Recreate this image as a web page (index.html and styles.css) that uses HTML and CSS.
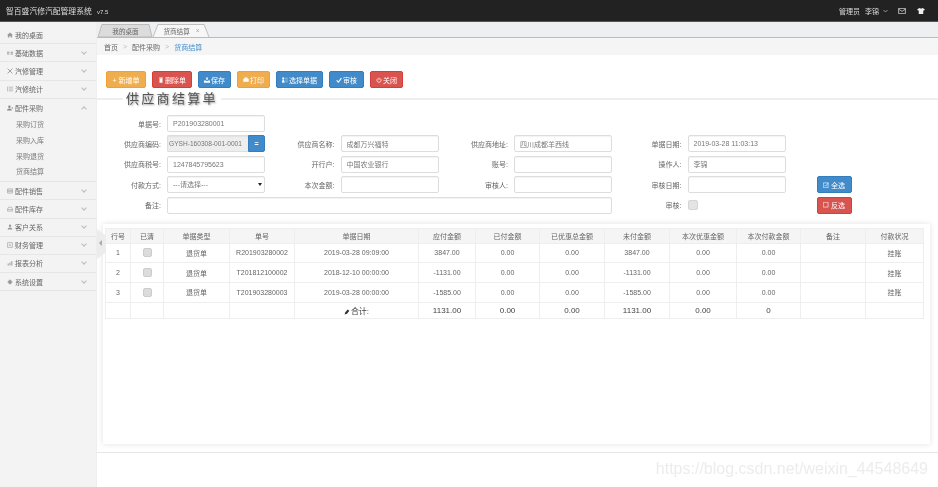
FILE: index.html
```html
<!DOCTYPE html>
<html lang="zh-CN">
  <head>
    <meta charset="UTF-8" />
    <title>智百盛汽修汽配管理系统</title>
    <link rel="stylesheet" href="styles.css">
  </head>
  <body>
    <header class="topbar">
      <div class="brand">智百盛汽修汽配管理系统 <small>v7.5</small></div>
      <div class="userbar">
        <span>管理员</span>
        <span class="username">李锦</span>
        <svg class="ico chev-top" viewBox="0 0 10 6"><path d="M1 1l4 4 4-4" fill="none" stroke="#ddd" stroke-width="1.2"/></svg>
        <svg class="ico mail" viewBox="0 0 10 8"><path d="M.5.5h9v7h-9z M.5 1.5l4.5 3 4.5-3" fill="none" stroke="#ddd"/></svg>
        <svg class="ico shirt" viewBox="0 0 10 8"><path d="M3 0L0 1.5 1 3.5l1-.4V8h6V3.100l1 .4 1-2L7 0Q5 1.500 3 0z" fill="#eee"/></svg>
      </div>
    </header>
    <div class="layout">
      <aside class="sidebar">
        <div class="nav-item"><svg class="ico" viewBox="0 0 10 10"><path d="M5 1L0 5.500h1.500V9h2.500V6.500h2V9h2.500V5.500H10z" fill="#999"/></svg>我的桌面</div>
        <div class="nav-item"><svg class="ico" viewBox="0 0 10 10"><path d="M0 3h4v1.500H0zM6 3h4v1.500H6zM0 6h4v1.500H0zM6 6h4v1.500H6z" fill="#999"/></svg>基础数据<i class="chev"></i></div>
        <div class="nav-item"><svg class="ico" viewBox="0 0 10 10"><path d="M1 1l8 8M9 1L1 9" stroke="#999" stroke-width="1.500"/></svg>汽修管理<i class="chev"></i></div>
        <div class="nav-item"><svg class="ico" viewBox="0 0 10 10"><path d="M1 1v8M3 2h7M3 5h7M3 8h7" stroke="#999"/></svg>汽修统计<i class="chev"></i></div>
        <div class="nav-item open"><svg class="ico" viewBox="0 0 10 10"><path d="M4 1a2 2 0 1 1 0 4 2 2 0 0 1 0-4zM0 9q0-3 4-3t4 3zM8 3l2 2-2 2z" fill="#888"/></svg>配件采购<i class="chev up"></i></div>
        <div class="subnav">
          <div>采购订货</div>
          <div>采购入库</div>
          <div>采购退货</div>
          <div>货商结算</div>
        </div>
        <div class="nav-item"><svg class="ico" viewBox="0 0 10 10"><path d="M1 1.500h8v7H1zM1 4h8M1 6h8" fill="none" stroke="#999"/></svg>配件销售<i class="chev"></i></div>
        <div class="nav-item"><svg class="ico" viewBox="0 0 10 10"><path d="M2.500 2h5l2 4v2.500h-9V6zM.5 6h9" fill="none" stroke="#999"/></svg>配件库存<i class="chev"></i></div>
        <div class="nav-item"><svg class="ico" viewBox="0 0 10 10"><path d="M5 1a2 2 0 1 1 0 4 2 2 0 0 1 0-4zM1 9q0-3 4-3t4 3z" fill="#999"/></svg>客户关系<i class="chev"></i></div>
        <div class="nav-item"><svg class="ico" viewBox="0 0 10 10"><path d="M1 1h8v8H1zM3.500 5h3M5 3.500v3" fill="none" stroke="#999"/></svg>财务管理<i class="chev"></i></div>
        <div class="nav-item"><svg class="ico" viewBox="0 0 10 10"><path d="M1 9V6h2v3zM4 9V4h2v5zM7 9V2h2v7z" fill="#aaa"/></svg>报表分析<i class="chev"></i></div>
        <div class="nav-item"><svg class="ico" viewBox="0 0 10 10"><circle cx="5" cy="5" r="3.200" fill="#999"/><path d="M5 .5v9M.5 5h9" stroke="#999"/></svg>系统设置<i class="chev"></i></div>
      </aside>
      <main class="main">
        <div class="handle"><i></i></div>
        <nav class="tabs">
          <div class="tab">
            <svg class="tab-shape" viewBox="0 0 56 13" preserveAspectRatio="none"><path d="M0 13L4 .5H52L55 13z" fill="#dcdcdc" stroke="#aaa" stroke-width=".7"/></svg>
            <span>我的桌面</span>
          </div>
          <div class="tab current">
            <svg class="tab-shape" viewBox="0 0 58 13" preserveAspectRatio="none"><path d="M0 13L5 .5H52L57 13" fill="#f7f7f7" stroke="#aaa" stroke-width=".7"/></svg>
            <span>货商结算</span><b>×</b>
          </div>
        </nav>
        <div class="crumbs">
          <span>首页</span><em>&gt;</em><span>配件采购</span><em>&gt;</em><a>货商结算</a>
        </div>
        <div class="toolbar">
          <button class="btn orange w40">+ 新增单</button>
          <button class="btn red w40"><svg class="ico" viewBox="0 0 10 10"><path d="M2 1h6v1.500H2zM2.500 3h5v6.500h-5z" fill="#fff"/></svg>删除单</button>
          <button class="btn blue w33"><svg class="ico" viewBox="0 0 10 10"><path d="M5 0l2 2.500H3zM4 2h2v3H4zM0 6h3l2 1 2-1h3v3.500H0z" fill="#fff"/></svg>保存</button>
          <button class="btn orange w33"><svg class="ico" viewBox="0 0 10 10"><path d="M2.500 1h5v2h2v5h-9V3h2z" fill="#fff"/></svg>打印</button>
          <button class="btn blue w47"><svg class="ico" viewBox="0 0 10 10"><path d="M2 1a1.500 1.500 0 1 1 0 3 1.500 1.500 0 0 1 0-3zM0 9q0-4 2-4t2 4zM5 2h5M5 5h5M5 8h5" fill="#fff" stroke="#fff" stroke-width=".6"/></svg>选择单据</button>
          <button class="btn blue w35"><svg class="ico" viewBox="0 0 10 10"><path d="M1 5.500l3 3 5-6.500" fill="none" stroke="#fff" stroke-width="1.800"/></svg>审核</button>
          <button class="btn red w33"><svg class="ico" viewBox="0 0 10 10"><path d="M3 2.500a3.500 3.500 0 1 0 4 0M5 1v4" fill="none" stroke="#fff" stroke-width="1.200"/></svg>关闭</button>
        </div>
        <fieldset class="sheet">
          <legend>供应商结算单</legend>
          <form class="fields">
            <label>单据号:</label>
            <input class="input" value="P201903280001" />
            <div class="row-rest"></div>

            <label>供应商编码:</label>
            <div class="input-group">
              <input class="input locked" value="GYSH-160308-001-0001" />
              <button type="button" class="addon">=</button>
            </div>
            <label>供应商名称:</label>
            <input class="input" value="成都万兴福特" />
            <label>供应商地址:</label>
            <input class="input" value="四川成都羊西线" />
            <label>单据日期:</label>
            <input class="input" value="2019-03-28 11:03:13" />
            <div></div>

            <label>供应商税号:</label>
            <input class="input" value="1247845795623" />
            <label>开行户:</label>
            <input class="input" value="中国农业银行" />
            <label>账号:</label>
            <input class="input" />
            <label>操作人:</label>
            <input class="input" value="李锦" />
            <div></div>

            <label>付款方式:</label>
            <div class="select-wrap">
              <select class="input"><option>---请选择---</option></select>
            </div>
            <label>本次金额:</label>
            <input class="input" />
            <label>审核人:</label>
            <input class="input" />
            <label>审核日期:</label>
            <input class="input" />
            <button type="button" class="btn blue pick"><svg class="ico" viewBox="0 0 10 10"><path d="M.5 1.500h8v8h-8z" fill="none" stroke="#fff"/><path d="M2.500 5l2 2 5-6" fill="none" stroke="#fff"/></svg>全选</button>

            <label>备注:</label>
            <input class="input wide" />
            <label>审核:</label>
            <div class="check-cell"><input type="checkbox" class="check" /></div>
            <button type="button" class="btn red pick"><svg class="ico" viewBox="0 0 10 10"><path d="M.5.5h8v8h-8z" fill="none" stroke="#fff"/></svg>反选</button>
          </form>
        </fieldset>
        <section class="card">
          <table class="bills">
            <colgroup>
              <col><col><col><col><col><col><col><col><col><col><col><col><col>
            </colgroup>
            <thead>
              <tr>
                <th>行号</th><th>已清</th><th>单据类型</th><th>单号</th><th>单据日期</th><th>应付金额</th><th>已付金额</th><th>已优惠总金额</th><th>未付金额</th><th>本次优惠金额</th><th>本次付款金额</th><th>备注</th><th>付款状况</th>
              </tr>
            </thead>
            <tbody>
              <tr>
                <td>1</td><td><input type="checkbox" class="check" /></td><td>退货单</td><td>R201903280002</td><td>2019-03-28 09:09:00</td><td>3847.00</td><td>0.00</td><td>0.00</td><td>3847.00</td><td>0.00</td><td>0.00</td><td></td><td>挂账</td>
              </tr>
              <tr>
                <td>2</td><td><input type="checkbox" class="check" /></td><td>退货单</td><td>T201812100002</td><td>2018-12-10 00:00:00</td><td>-1131.00</td><td>0.00</td><td>0.00</td><td>-1131.00</td><td>0.00</td><td>0.00</td><td></td><td>挂账</td>
              </tr>
              <tr>
                <td>3</td><td><input type="checkbox" class="check" /></td><td>退货单</td><td>T201903280003</td><td>2019-03-28 00:00:00</td><td>-1585.00</td><td>0.00</td><td>0.00</td><td>-1585.00</td><td>0.00</td><td>0.00</td><td></td><td>挂账</td>
              </tr>
              <tr class="total">
                <td></td><td></td><td></td><td></td><td><svg class="ico" viewBox="0 0 10 10"><path d="M1 9l1-3 4-5 3 2-4 5z" fill="#333"/></svg>合计:</td><td>1131.00</td><td>0.00</td><td>0.00</td><td>1131.00</td><td>0.00</td><td>0</td><td></td><td></td>
              </tr>
            </tbody>
          </table>
        </section>
        <div class="foot-line"></div>
      </main>
    </div>
    <div class="watermark">https://blog.csdn.net/weixin_44548649</div>
  </body>
</html>
```

FILE: styles.css
```css
* {
  box-sizing: border-box;
}
html,
body {
  height: 487px;
  margin: 0;
  overflow: hidden;
  background: #fff;
}
body {
  color: #666;
  font-family: 'Liberation Sans', 'Noto Sans CJK SC', sans-serif;
  font-size: 7px;
  filter: blur(0.35px);
}
.ico {
  width: 6px;
  height: 6px;
  flex: none;
}

/* top bar */
.topbar {
  display: flex;
  justify-content: space-between;
  align-items: center;
  height: 22px;
  padding: 0 13px 0 6px;
  background: #222;
  border-bottom: 1px solid #555;
  color: #ddd;
}
.brand {
  font-size: 7.8px;
}
.brand small {
  margin-left: 3px;
  font-size: 6px;
}
.userbar {
  display: flex;
  align-items: center;
}
.username {
  margin-left: 5px;
}
.chev-top {
  margin-left: 4px;
  width: 5px;
}
.mail {
  margin-left: 10px;
  width: 8px;
}
.shirt {
  margin-left: 11px;
  width: 8px;
}

.layout {
  display: flex;
  height: 465px;
}

/* sidebar */
.sidebar {
  width: 97px;
  flex: none;
  padding-top: 4px;
  background: #f3f3f3;
  border-right: 1px solid #eee;
}
.nav-item {
  display: flex;
  align-items: center;
  gap: 2px;
  height: 18.2px;
  padding-left: 7px;
  border-bottom: 1px solid #e6e6e6;
  color: #666;
}
.nav-item.open {
  border-bottom: 0;
}
.chev {
  width: 4px;
  height: 4px;
  margin-left: auto;
  margin-right: 10px;
  margin-top: -2px;
  border-right: 1px solid #bbb;
  border-bottom: 1px solid #bbb;
  transform: rotate(45deg);
}
.chev.up {
  margin-top: 2px;
  transform: rotate(225deg);
}
.subnav {
  padding: 0 0 1px 16px;
  border-bottom: 1px solid #e6e6e6;
  color: #777;
}
.subnav div {
  height: 15.8px;
  line-height: 15.8px;
}

/* main */
.main {
  position: relative;
  flex: 1;
  min-width: 0;
}
.handle {
  position: absolute;
  left: 0;
  top: 207px;
  width: 8px;
  height: 30px;
  background: #ececec;
  clip-path: polygon(0 0, 100% 20%, 100% 80%, 0 100%);
}
.handle i {
  position: absolute;
  left: 2px;
  top: 11px;
  border: 3px solid transparent;
  border-right: 3px solid #aaa;
  border-left: 0;
}
.tabs {
  display: flex;
  align-items: flex-end;
  height: 16px;
  padding-left: 1px;
  background: #eeeff1;
  border-bottom: 1px solid #bbb;
}
.tab {
  position: relative;
  display: flex;
  justify-content: center;
  align-items: center;
  gap: 6px;
  width: 55px;
  height: 13px;
  color: #666;
  font-size: 6.6px;
}
.tab.current {
  width: 57px;
}
.tab span,
.tab b {
  position: relative;
}
.tab b {
  color: #aaa;
  font-weight: normal;
}
.tab-shape {
  position: absolute;
  left: 0;
  top: 0;
  width: 100%;
  height: 100%;
}
.crumbs {
  display: flex;
  align-items: center;
  height: 17px;
  padding-left: 7px;
  background: #f5f5f5;
  color: #666;
}
.crumbs em {
  margin: 0 5px;
  color: #bbb;
  font-style: normal;
}
.crumbs a {
  color: #428bca;
}

/* toolbar */
.toolbar {
  display: flex;
  gap: 6px;
  padding: 16px 0 0 9px;
}
.btn {
  display: inline-flex;
  justify-content: center;
  align-items: center;
  gap: 1px;
  height: 17px;
  padding: 0;
  border: 1px solid transparent;
  border-radius: 2px;
  color: #fff;
  font: inherit;
}
.orange {
  background: #f0ad4e;
  border-color: #eea236;
}
.red {
  background: #d9534f;
  border-color: #d43f3a;
}
.blue {
  background: #428bca;
  border-color: #357ebd;
}
.w33 {
  width: 33px;
}
.w35 {
  width: 35px;
}
.w40 {
  width: 40px;
}
.w47 {
  width: 47px;
}

/* form */
.sheet {
  margin: 2px 0 0;
  padding: 0;
  border: 0;
  border-top: 2px solid #eee;
  min-width: 0;
}
.sheet legend {
  margin-left: 26px;
  padding: 0 3px;
  color: #555;
  font-size: 13px;
  line-height: 17px;
  letter-spacing: 2.3px;
  text-shadow: 1px 1px 2px #999;
}
.fields {
  display: grid;
  grid-template-columns: 64px 98px repeat(3, 75.5px 98px) 67px;
  grid-auto-rows: 17px;
  row-gap: 3.4px;
  align-items: center;
  margin: 8px 0 0 6px;
}
.fields label {
  padding-right: 6px;
  text-align: right;
}
.input {
  width: 100%;
  height: 17px;
  padding: 0 5px;
  border: 1px solid #ddd;
  border-radius: 2px;
  background: #fff;
  box-shadow: inset 0 1px 1px rgba(0, 0, 0, 0.05);
  color: #777;
  font: inherit;
  outline: 0;
}
.row-rest {
  grid-column: 3 / -1;
}
.input-group {
  display: flex;
}
.locked {
  flex: 1;
  min-width: 0;
  padding: 0 0 0 1px;
  background: #eee;
  border-right: 0;
  border-radius: 2px 0 0 2px;
  font-size: 6.6px;
}
.addon {
  width: 17px;
  flex: none;
  padding: 0;
  border: 1px solid #357ebd;
  border-radius: 0 2px 2px 0;
  background: #428bca;
  color: #fff;
  font: bold 7px 'Liberation Sans', sans-serif;
}
.select-wrap {
  position: relative;
}
.select-wrap select {
  display: block;
  appearance: none;
}
.select-wrap::after {
  content: '';
  position: absolute;
  right: 3px;
  top: 7px;
  border: 2px solid transparent;
  border-top: 3px solid #222;
  border-bottom: 0;
}
.wide {
  grid-column: span 5;
}
.check-cell {
  display: flex;
  align-items: center;
}
.check {
  appearance: none;
  display: block;
  width: 10px;
  height: 10px;
  margin: 0;
  border: 1px solid #d5d5d5;
  border-radius: 2px;
  background: #e4e4e4;
}
.pick {
  justify-self: end;
  width: 35px;
  margin-right: 1px;
  gap: 2px;
}

/* table card */
.card {
  height: 220px;
  margin: 10px 8px 0 6px;
  padding: 4px 7px 0 2px;
  background: #fff;
  box-shadow: 0 0 6px rgba(0, 0, 0, 0.12);
}
.bills {
  width: 818px;
  table-layout: fixed;
  border-collapse: collapse;
}
.bills col:nth-child(1) { width: 25px; }
.bills col:nth-child(2) { width: 33px; }
.bills col:nth-child(3) { width: 66px; }
.bills col:nth-child(4) { width: 65px; }
.bills col:nth-child(5) { width: 124px; }
.bills col:nth-child(6) { width: 57px; }
.bills col:nth-child(7) { width: 64px; }
.bills col:nth-child(8) { width: 65px; }
.bills col:nth-child(9) { width: 65px; }
.bills col:nth-child(10) { width: 67px; }
.bills col:nth-child(11) { width: 64px; }
.bills col:nth-child(12) { width: 65px; }
.bills col:nth-child(13) { width: 58px; }
.bills th,
.bills td {
  padding: 0;
  border: 1px solid #eee;
  color: #666;
  font-weight: normal;
  text-align: center;
}
.bills th {
  height: 15px;
  background: #f5f5f5;
}
.bills td {
  height: 19.7px;
}
.bills .check {
  width: 9px;
  height: 9px;
  margin: 0 auto;
  background: #dcdcdc;
  border-color: #ccc;
}
.total td {
  height: 16px;
  color: #444;
  font-size: 8px;
}
.total .ico {
  margin-right: 1px;
  vertical-align: -1px;
}

.foot-line {
  margin-top: 8px;
  border-top: 1px solid #e6e6e6;
}
.watermark {
  position: absolute;
  right: 10px;
  top: 460px;
  color: #ececec;
  font-size: 16px;
}
```
